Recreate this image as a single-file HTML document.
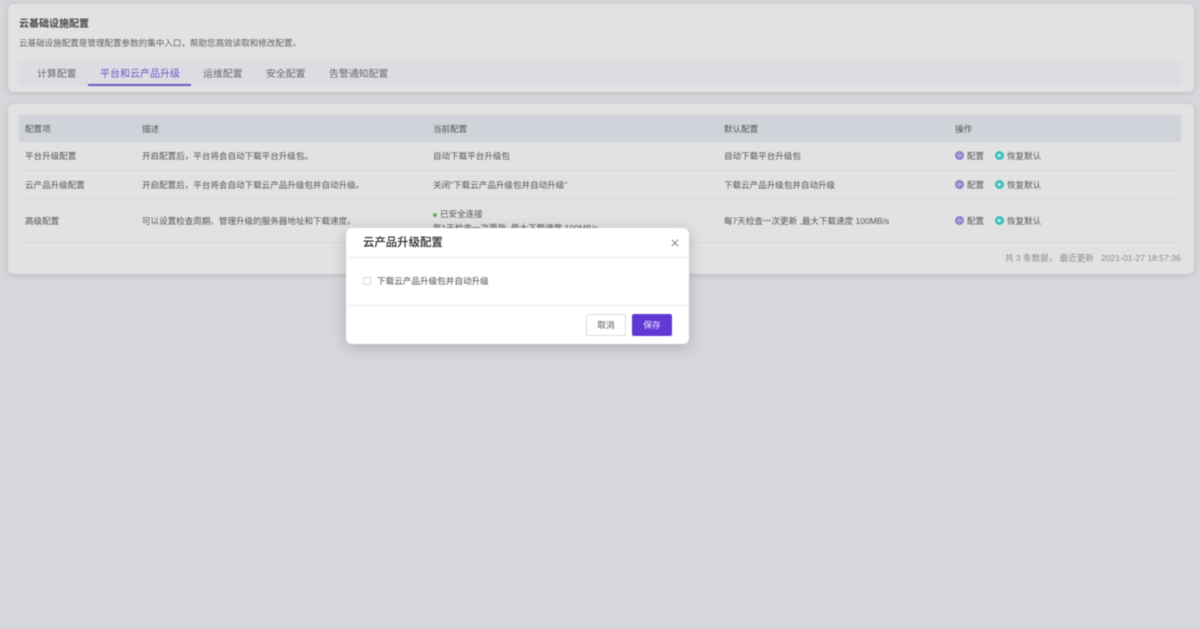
<!DOCTYPE html>
<html><head><meta charset="utf-8">
<style>
*{box-sizing:border-box}
html,body{margin:0;padding:0;width:1200px;height:629px;overflow:hidden;background:#d6d7db;font-family:"Liberation Sans","Noto Sans CJK SC",sans-serif;}
#w{position:absolute;left:0;top:0;width:1200px;height:629px;filter:blur(.4px)}
.t{position:absolute;white-space:nowrap;line-height:12px;font-size:8.55px;color:#545454}
.card{position:absolute;background:#e2e2e2;border-radius:6px;box-shadow:0 1px 6px rgba(120,120,130,.3)}
.line{position:absolute;left:19px;width:1162px;height:1px;background:#d8d8d9}
.tab{position:absolute;top:68px;line-height:14px;font-size:9.9px;color:#6a6a6d;white-space:nowrap}
.ic{position:absolute;width:9px;height:9px}
</style></head><body><div id="w">
<div class="card" style="left:8px;top:4px;width:1186px;height:88px"></div>
<div class="t" style="left:19px;top:19px;font-size:10px;font-weight:bold;color:#474747">云基础设施配置</div>
<div class="t" style="left:19px;top:37px;color:#606060">云基础设施配置是管理配置参数的集中入口，帮助您高效读取和修改配置。</div>
<div style="position:absolute;left:19px;top:61px;width:1162px;height:25px;background:#dcdde2;border-radius:4px"></div>
<div class="tab" style="left:37px">计算配置</div>
<div class="tab" style="left:100px;color:#6e57c4;font-size:10px">平台和云产品升级</div>
<div style="position:absolute;left:88px;top:84px;width:103px;height:2px;background:#6e57c4"></div>
<div class="tab" style="left:203px">运维配置</div>
<div class="tab" style="left:266px">安全配置</div>
<div class="tab" style="left:329px">告警通知配置</div>

<div class="card" style="left:8px;top:104px;width:1186px;height:170px"></div>
<div style="position:absolute;left:19px;top:115px;width:1162px;height:27px;background:#d1d3db"></div>
<div class="t" style="left:25px;top:123px">配置项</div>
<div class="t" style="left:142px;top:123px">描述</div>
<div class="t" style="left:433px;top:123px">当前配置</div>
<div class="t" style="left:724px;top:123px">默认配置</div>
<div class="t" style="left:955px;top:123px">操作</div>

<div class="t" style="left:25px;top:150px">平台升级配置</div>
<div class="t" style="left:142px;top:150px">开启配置后，平台将会自动下载平台升级包。</div>
<div class="t" style="left:433px;top:150px">自动下载平台升级包</div>
<div class="t" style="left:724px;top:150px">自动下载平台升级包</div>
<div class="line" style="top:170px"></div>

<div class="t" style="left:25px;top:179px">云产品升级配置</div>
<div class="t" style="left:142px;top:179px">开启配置后，平台将会自动下载云产品升级包并自动升级。</div>
<div class="t" style="left:433px;top:179px">关闭"下载云产品升级包并自动升级"</div>
<div class="t" style="left:724px;top:179px">下载云产品升级包并自动升级</div>
<div class="line" style="top:199px"></div>

<div class="t" style="left:25px;top:215px">高级配置</div>
<div class="t" style="left:142px;top:215px">可以设置检查周期、管理升级的服务器地址和下载速度。</div>
<div style="position:absolute;left:433px;top:213px;width:4px;height:4px;border-radius:50%;background:#5cb04a"></div>
<div class="t" style="left:440px;top:208px">已安全连接</div>
<div class="t" style="left:433px;top:222px">每1天检查一次更新 ,最大下载速度 100MB/s</div>
<div class="t" style="left:724px;top:215px">每7天检查一次更新 ,最大下载速度 100MB/s</div>
<div class="line" style="top:242px"></div>

<svg class="ic" style="left:955px;top:151px" viewBox="0 0 9 9"><circle cx="4.5" cy="4.5" r="4.5" fill="#8d7cc6"/><path d="M4.5 2v5M2.6 3.2v2.6M6.4 3.2v2.6" stroke="#d9d4ec" stroke-width=".8" fill="none"/></svg>
<div class="t" style="left:967px;top:150px">配置</div>
<svg class="ic" style="left:995px;top:151px" viewBox="0 0 9 9"><circle cx="4.5" cy="4.5" r="4.5" fill="#3dbdb8"/><path d="M2.8 3h2l1.6 1.5-1.6 1.5h-2z" fill="#d9f0ef"/></svg>
<div class="t" style="left:1007px;top:150px">恢复默认</div>
<svg class="ic" style="left:955px;top:180px" viewBox="0 0 9 9"><circle cx="4.5" cy="4.5" r="4.5" fill="#8d7cc6"/><path d="M4.5 2v5M2.6 3.2v2.6M6.4 3.2v2.6" stroke="#d9d4ec" stroke-width=".8" fill="none"/></svg>
<div class="t" style="left:967px;top:179px">配置</div>
<svg class="ic" style="left:995px;top:180px" viewBox="0 0 9 9"><circle cx="4.5" cy="4.5" r="4.5" fill="#3dbdb8"/><path d="M2.8 3h2l1.6 1.5-1.6 1.5h-2z" fill="#d9f0ef"/></svg>
<div class="t" style="left:1007px;top:179px">恢复默认</div>
<svg class="ic" style="left:955px;top:216px" viewBox="0 0 9 9"><circle cx="4.5" cy="4.5" r="4.5" fill="#8d7cc6"/><path d="M4.5 2v5M2.6 3.2v2.6M6.4 3.2v2.6" stroke="#d9d4ec" stroke-width=".8" fill="none"/></svg>
<div class="t" style="left:967px;top:215px">配置</div>
<svg class="ic" style="left:995px;top:216px" viewBox="0 0 9 9"><circle cx="4.5" cy="4.5" r="4.5" fill="#3dbdb8"/><path d="M2.8 3h2l1.6 1.5-1.6 1.5h-2z" fill="#d9f0ef"/></svg>
<div class="t" style="left:1007px;top:215px">恢复默认</div>

<div class="t" style="left:1005px;top:252px;color:#8b8b8b">共 3 条数据， 最近更新</div>
<div class="t" style="left:1101px;top:252px;color:#8b8b8b;font-size:8.6px">2021-01-27 18:57:36</div>

<div style="position:absolute;left:346px;top:228px;width:343px;height:116px;background:#fff;border-radius:6px;box-shadow:0 3px 14px rgba(70,70,80,.28)"></div>
<div class="t" style="left:363px;top:236px;font-size:11.4px;line-height:14px;font-weight:500;color:#222">云产品升级配置</div>
<svg style="position:absolute;left:671px;top:239px;width:8px;height:8px" viewBox="0 0 8 8"><path d="M.8.8l6.4 6.4M7.2.8L.8 7.2" stroke="#555" stroke-width=".7" fill="none"/></svg>
<div style="position:absolute;left:346px;top:257px;width:343px;height:1px;background:#e8e8ea"></div>
<div style="position:absolute;left:363px;top:277px;width:8px;height:8px;border:1px solid #d6d6d9;border-radius:1.5px;background:#fff"></div>
<div class="t" style="left:377px;top:275px;color:#4d4d4d;font-size:8.6px">下载云产品升级包并自动升级</div>
<div style="position:absolute;left:346px;top:305px;width:343px;height:1px;background:#e8e8ea"></div>
<div style="position:absolute;left:586px;top:314px;width:40px;height:22px;border:1px solid #dcdcdf;border-radius:2px;background:#fff;text-align:center;font-size:8.6px;line-height:20px;color:#555">取消</div>
<div style="position:absolute;left:632px;top:314px;width:40px;height:22px;border-radius:2px;background:#6339d6;text-align:center;font-size:8.6px;line-height:22px;color:#f0ecfb">保存</div>
</div></body></html>
